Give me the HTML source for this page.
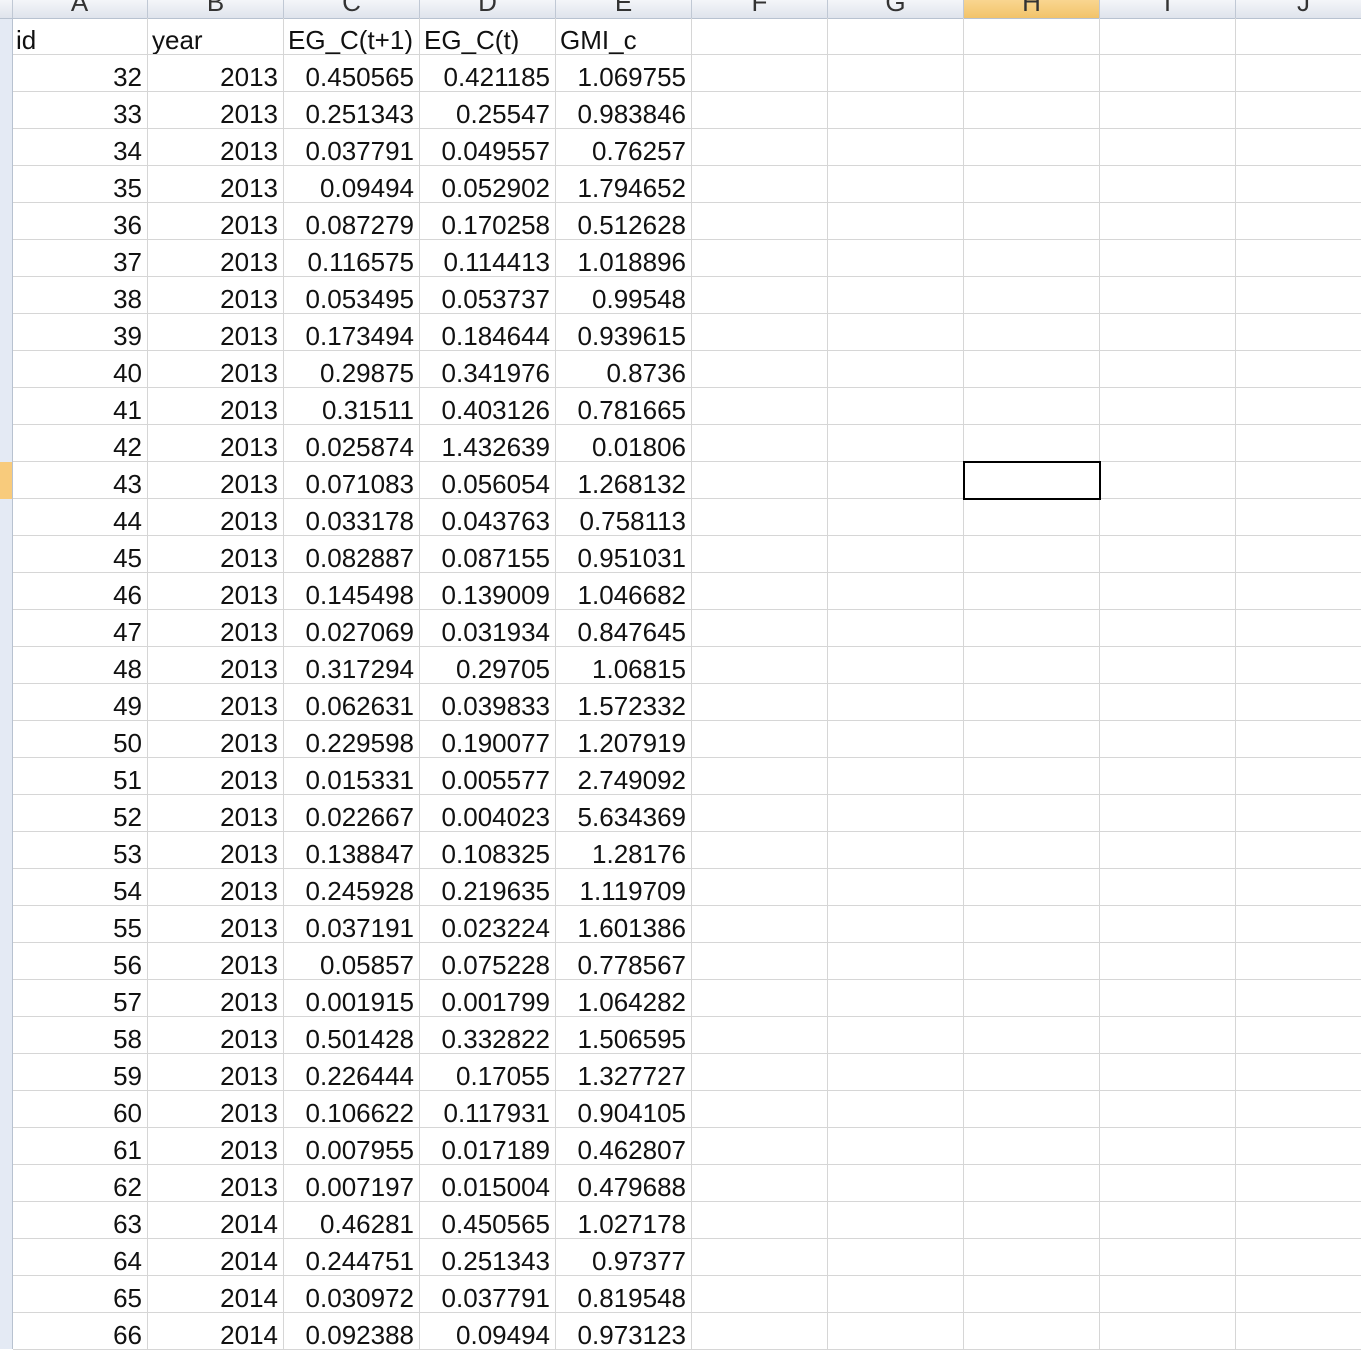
<!DOCTYPE html>
<html><head><meta charset="utf-8"><style>
body{margin:0;width:1361px;height:1347px;overflow:hidden;background:#fff;font-family:"Liberation Sans","Noto Sans CJK SC",sans-serif;}
#hdr{position:absolute;left:0;top:0;height:18px;width:1361px;background:linear-gradient(#f4f6f9,#dfe4ec);border-bottom:1px solid #b8c2d0;overflow:hidden}
.ch{position:absolute;top:0;height:18px;border-right:1px solid #c0c8d4;color:#333;font-size:26px;text-align:center;line-height:0px;}
.ch span{position:relative;top:2px}
#rh{position:absolute;left:0;top:19px;width:12px;height:1330px;background:#e4eaf4;border-right:1px solid #b8c2d0}
.r{position:absolute;left:13px;width:1348px;height:37px;border-bottom:1px solid #d6d6d6;box-sizing:border-box;font-size:26px;color:#111}
.c{position:absolute;top:0;height:36px;width:136px;box-sizing:border-box;border-right:1px solid #d6d6d6;text-align:right;padding:0 5px 0 4px;line-height:44px;white-space:nowrap;overflow:hidden}
.l{text-align:left}
#sel{position:absolute;left:963px;top:461px;width:134px;height:35px;border:2px solid #000}
#rsel{position:absolute;left:0;top:462px;width:12px;height:37px;background:#f8cb7c}
</style></head><body>
<div id="hdr">
<div class="ch" style="left:0;width:12px"></div>
<div class="ch" style="left:12px;width:135px"><span>A</span></div>
<div class="ch" style="left:148px;width:135px"><span>B</span></div>
<div class="ch" style="left:284px;width:135px"><span>C</span></div>
<div class="ch" style="left:420px;width:135px"><span>D</span></div>
<div class="ch" style="left:556px;width:135px"><span>E</span></div>
<div class="ch" style="left:692px;width:135px"><span>F</span></div>
<div class="ch" style="left:828px;width:135px"><span>G</span></div>
<div class="ch" style="left:964px;width:135px;background:linear-gradient(#f9d690,#f2c36a)"><span>H</span></div>
<div class="ch" style="left:1100px;width:135px"><span>I</span></div>
<div class="ch" style="left:1236px;width:135px"><span>J</span></div>
</div>
<div id="rh"></div>
<div id="rsel"></div>
<div id="rows"></div>
<div id="sel"></div>
<script>
var d=[["id","year","EG_C(t+1)","EG_C(t)","GMI_c"],
[32,2013,"0.450565","0.421185","1.069755"],[33,2013,"0.251343","0.25547","0.983846"],[34,2013,"0.037791","0.049557","0.76257"],[35,2013,"0.09494","0.052902","1.794652"],[36,2013,"0.087279","0.170258","0.512628"],[37,2013,"0.116575","0.114413","1.018896"],[38,2013,"0.053495","0.053737","0.99548"],[39,2013,"0.173494","0.184644","0.939615"],[40,2013,"0.29875","0.341976","0.8736"],[41,2013,"0.31511","0.403126","0.781665"],[42,2013,"0.025874","1.432639","0.01806"],[43,2013,"0.071083","0.056054","1.268132"],[44,2013,"0.033178","0.043763","0.758113"],[45,2013,"0.082887","0.087155","0.951031"],[46,2013,"0.145498","0.139009","1.046682"],[47,2013,"0.027069","0.031934","0.847645"],[48,2013,"0.317294","0.29705","1.06815"],[49,2013,"0.062631","0.039833","1.572332"],[50,2013,"0.229598","0.190077","1.207919"],[51,2013,"0.015331","0.005577","2.749092"],[52,2013,"0.022667","0.004023","5.634369"],[53,2013,"0.138847","0.108325","1.28176"],[54,2013,"0.245928","0.219635","1.119709"],[55,2013,"0.037191","0.023224","1.601386"],[56,2013,"0.05857","0.075228","0.778567"],[57,2013,"0.001915","0.001799","1.064282"],[58,2013,"0.501428","0.332822","1.506595"],[59,2013,"0.226444","0.17055","1.327727"],[60,2013,"0.106622","0.117931","0.904105"],[61,2013,"0.007955","0.017189","0.462807"],[62,2013,"0.007197","0.015004","0.479688"],[63,2014,"0.46281","0.450565","1.027178"],[64,2014,"0.244751","0.251343","0.97377"],[65,2014,"0.030972","0.037791","0.819548"],[66,2014,"0.092388","0.09494","0.973123"]];
var h="";
d.forEach(function(r,i){h+='<div class="r" style="top:'+(18+i*37)+'px">';
for(var j=0;j<10;j++){var v=j<5?r[j]:"";h+='<div class="c'+(i==0?' l':'')+'" style="left:'+(j*136-1)+'px'+(j==0?';width:136px':'')+'">'+v+'</div>';}
h+='</div>';});
document.getElementById("rows").innerHTML=h;
</script>
</body></html>
